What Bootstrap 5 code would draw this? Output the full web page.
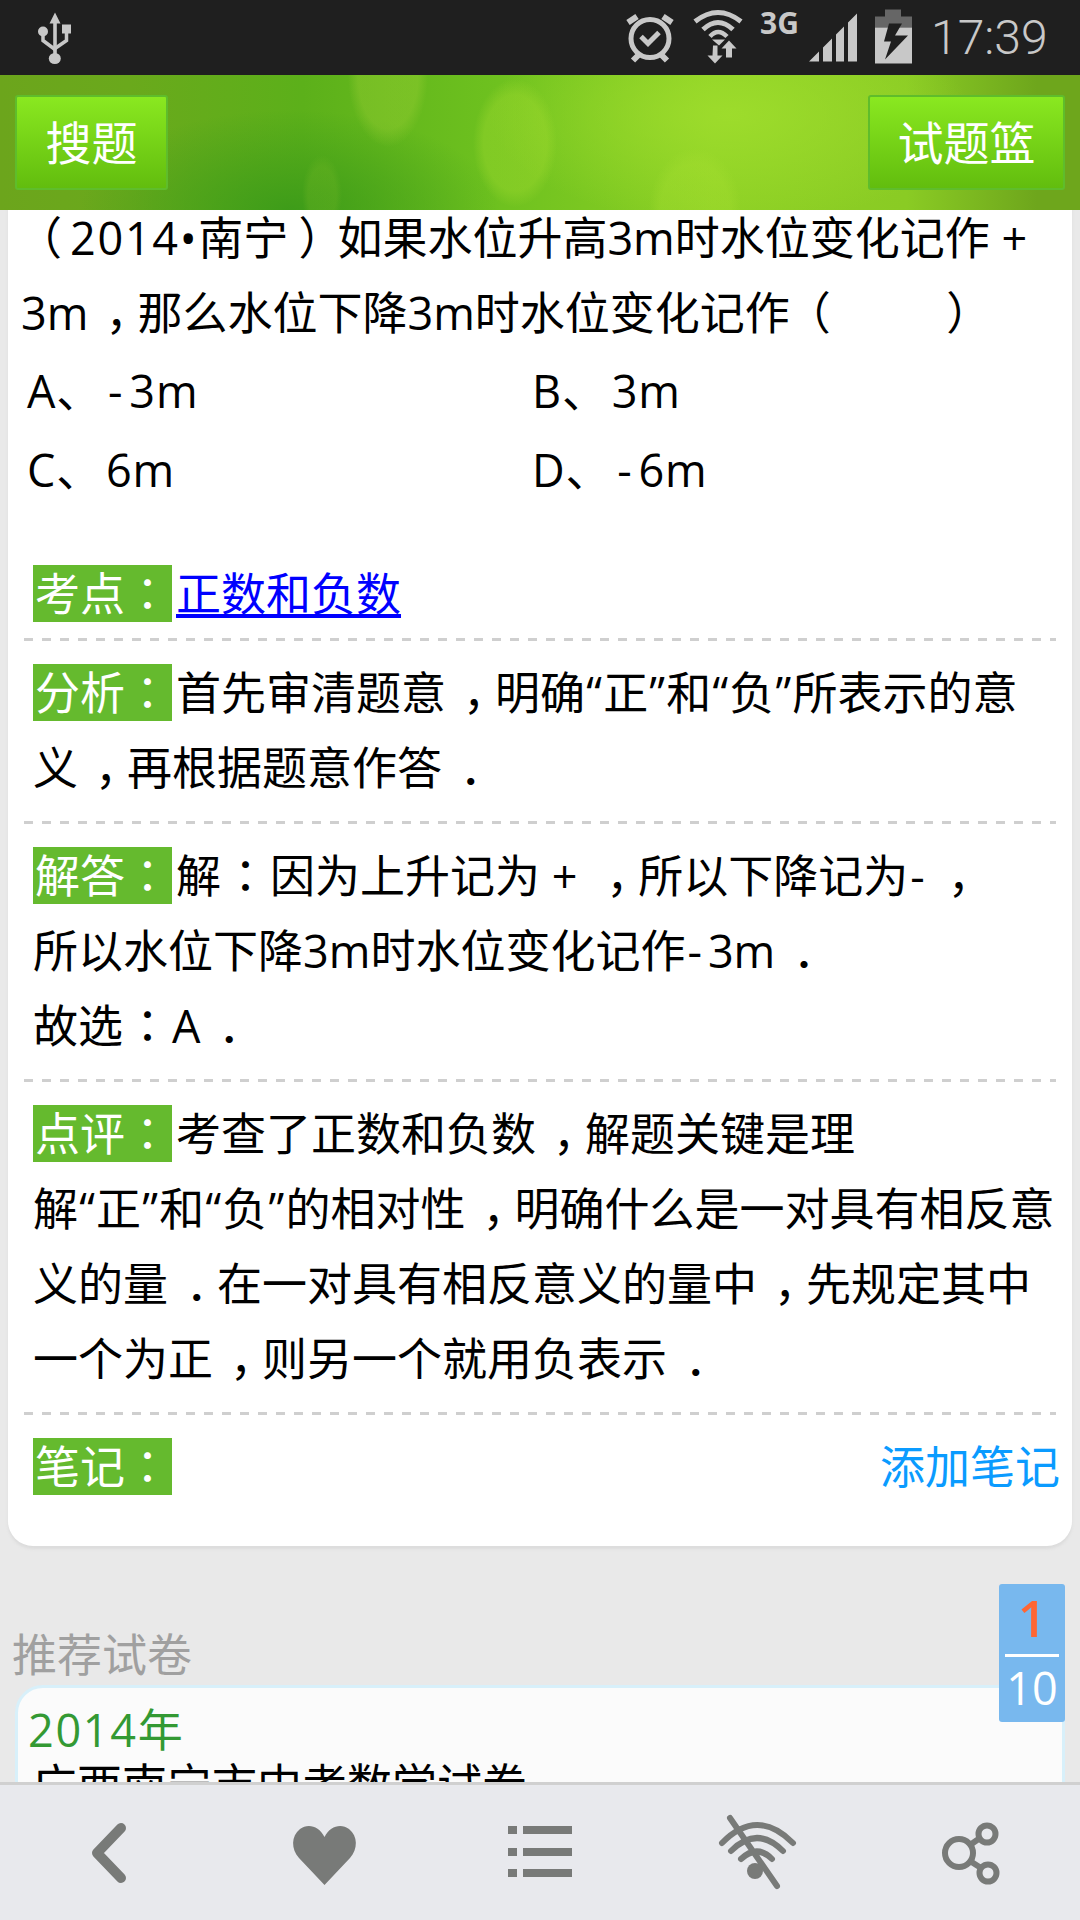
<!DOCTYPE html>
<html>
<head>
<meta charset="utf-8">
<title>试题详情</title>
<link rel="stylesheet" href="https://cdn.jsdelivr.net/npm/bootstrap@5.3.0/dist/css/bootstrap.min.css">
<style>
html,body{height:1920px;overflow:hidden}
body{position:relative;width:1080px;background:#e9e9e9;color:#000;font-family:"Open Sans","Noto Sans CJK SC",sans-serif;font-size:45px;line-height:75px}
.pn{font-family:"Noto Sans CJK TC",sans-serif;padding:0 2px;line-height:1}
.cm,.dt,.pl,.pr{font-feature-settings:"halt"}
.cm{padding:0 9.500px 0 17px}
.dt{padding:0 8.500px 0 18px}
.pl{padding:0 8px 0 18.500px}
.pr{padding:0 16.500px 0 10px}
.ci{margin-right:4px}
.ds{padding:0 6px 0 2px}
.num{letter-spacing:1.700px}
.qt{padding:0 1.200px}
.gap{letter-spacing:.5px}
.sbar{height:75px;background:#1f1f1f;color:#c8c8c8}
.sbar svg{display:block;height:60px;flex:none}
.ic-fill{fill:#c8c8c8}
.ic-line{fill:none;stroke:#c8c8c8}
.sig3g{width:38px;margin:8px 11px 0 17px;font-size:30px;font-weight:700;line-height:30px;align-self:flex-start}
.clock{margin:0 32px 0 18px;width:117px;font-family:Roboto,sans-serif;font-weight:300;font-size:48px;line-height:75px;white-space:nowrap}
.topbar{position:relative;z-index:2;height:135px;padding:20px 15px;
 background:
 radial-gradient(ellipse 40px 72px at 388px 0px,rgba(175,215,60,.28) 75%,rgba(175,215,60,0) 100%),
 radial-gradient(ellipse 42px 64px at 515px 68px,rgba(175,225,50,.3) 75%,rgba(175,225,50,0) 100%),
 radial-gradient(ellipse 46px 62px at 695px 135px,rgba(170,225,50,.3) 75%,rgba(170,225,50,0) 100%),
 radial-gradient(ellipse 20px 40px at 322px 120px,rgba(130,190,40,.22) 70%,rgba(130,190,40,0) 100%),
 radial-gradient(ellipse 210px 100px at 290px 135px,rgba(60,155,25,.95),rgba(60,155,25,0) 100%),
 radial-gradient(ellipse 240px 110px at 730px 40px,rgba(160,222,45,.85),rgba(160,222,45,0) 100%),
 linear-gradient(90deg,#6ca51c 0,#6aa91c 12%,#5cb01a 28%,#6ec11f 46%,#8dd024 66%,#8acb24 84%,#6ea61c 96%,#6ea61c 100%)}
.gbtn.btn{height:95px;padding:0;border:2px solid #5fbd2b;border-radius:3px;background:linear-gradient(#8ae820,#62bd0e);color:#fff;font-size:46px;line-height:90px}
.gbtn-a.btn{width:153px}
.gbtn-b.btn{width:197px}
.sheet.card{margin:0 8px;border:0;background:#fff;border-radius:0 0 25px 25px;box-shadow:0 3px 3px #dcdcdc;height:1346px;color:#000;display:block}
.ask{padding:0 0 0 13px;margin-top:-10px}
.opts{margin:2px 0 0 19px;width:1010px;letter-spacing:.8px}
.opts>div{height:78.5px;line-height:78.5px}
.sect{padding:17px 8px 16px 25px;white-space:nowrap;background-image:repeating-linear-gradient(90deg,#cfcfcf 0 9px,transparent 9px 18px);background-size:1032px 3px;background-position:16px 0;background-repeat:no-repeat}
.sect-first{background-image:none;margin-top:47px;padding-top:0;padding-bottom:7px}
.tag{display:inline-block;width:139px;height:57px;line-height:57px;padding-left:2px;margin:9px 4px 0 0;background:#65ba2e;color:#fff;white-space:nowrap;vertical-align:top}
.tag .pn{padding:0}
.kp{color:#00f;text-decoration:underline}
.addnote{color:#0a9bff;text-decoration:none;margin-right:4px}
.recom{margin:72px 0 0 12px;color:#a0a0a0;line-height:74px;font-size:45px}
.paper.card{margin:-7px 0 0 15px;width:1050px;height:300px;display:block;background:#fbfbfb;border:3px solid #d8f0fa;border-radius:28px;padding:0 10px;color:#000}
.yr{color:#339933;line-height:66px;margin-top:9px}
.ptitle{padding-left:4px;line-height:44px}
.pager{position:absolute;z-index:3;left:999px;top:1584px;width:66px;height:138px;background:#78b8ee;border-radius:3px;color:#fff;text-align:center;line-height:1}
.pg-now{color:#ff6633;font-size:50px;font-weight:600;height:73px;line-height:68px;margin:0 6px;border-bottom:3px solid #fff}
.pg-all{font-size:45px;line-height:62px}
.dock{position:absolute;z-index:3;left:0;right:0;top:1782px;height:138px;background:#e8e9ed;border-top:3px solid #d0d0d0}
.dock-cell{flex:1 1 0}
.dock svg{display:block;width:90px;height:90px}
.gy{fill:#787a78}
.gl{fill:none;stroke:#787a78}
</style>
</head>
<body>
<div class="sbar d-flex align-items-center">
  <svg style="width:36px;margin-left:37px" viewBox="37 7.5 36 60"><path class="ic-fill" d="M55 12l5.500 11h-3.700v31h-3.600V23h-3.700z"/><ellipse class="ic-fill" cx="54.800" cy="58" rx="6" ry="5.500"/><circle class="ic-fill" cx="43" cy="31" r="5"/><rect class="ic-fill" x="62" y="24" width="9" height="9"/><path class="ic-line" stroke-width="3.500" d="M43 33v7l12 9M66.500 32v8l-11.500 8"/></svg>
  <div class="ms-auto d-flex align-items-center">
    <svg style="width:50px" viewBox="625 7.5 50 60"><circle class="ic-line" cx="650" cy="38" r="19" stroke-width="5"/><path class="ic-line" stroke-width="5" d="M641 36l7 7 11-11"/><path class="ic-line" stroke-width="6" d="M628 22l9-6M672 22l-9-6M633 60l6-6M667 60l-6-6"/></svg>
    <svg style="width:50px;margin-left:18px" viewBox="693 7.500 50 60"><path class="ic-line" stroke-width="5" d="M695 21Q718 3 741 21M703 29Q718 15 733 29"/><path class="ic-line" stroke-width="4.500" d="M710 36Q718 27 727 36"/><path class="ic-fill" d="M712 39h13l-6 6zM713 45h4.500v10h5l-7.500 8-7.500-8h5zM726 57V48h-4.500l7.500-8 7.500 8h-4.500v9z"/></svg>
    <div class="sig3g">3G</div>
    <svg style="width:48px" viewBox="809 7.500 48 60"><path class="ic-fill" d="M809 61l10-10v10zM823 61V47l9-9v23zM836 61V34l8-8v35zM848 61V22l9-9v48z"/></svg>
    <svg style="width:38px;margin-left:18px" viewBox="875 7.500 38 60"><path fill="#666" d="M885 9h16v7h11v11h-37V16h10z"/><path class="ic-fill" d="M875 27h37v36h-37z"/><path fill="#1f1f1f" d="M889 23h13l-7 12h13l-23 24 6-18h-7z"/></svg>
    <div class="clock">17:39</div>
  </div>
</div>
<header class="topbar d-flex justify-content-between">
  <a class="btn gbtn gbtn-a">搜题</a>
  <a class="btn gbtn gbtn-b">试题篮</a>
</header>
<main class="card sheet">
  <div class="ask"><span class="pl">（</span><span class="num">2014•</span>南宁<span class="pr">）</span>如果水位升高3m时水位变化记作 +<br>3m<span class="cm">，</span>那么水位下降3m时水位变化记作<span class="pl">（</span><span class="gap">&nbsp;&nbsp;&nbsp;&nbsp;&nbsp;&nbsp;&nbsp;&nbsp;</span><span class="pr">）</span></div>
  <div class="row g-0 opts">
    <div class="col-6">A<span class="ci">、</span><span class="ds">-</span>3m</div>
    <div class="col-6">B<span class="ci">、</span>3m</div>
    <div class="col-6">C<span class="ci">、</span>6m</div>
    <div class="col-6">D<span class="ci">、</span><span class="ds">-</span>6m</div>
  </div>
  <section class="sect sect-first"><span class="tag">考点<span class="pn">：</span></span><a class="kp" href="#">正数和负数</a></section>
  <section class="sect"><span class="tag">分析<span class="pn">：</span></span>首先审清题意<span class="cm">，</span>明确<span class="qt">“</span>正<span class="qt">”</span>和<span class="qt">“</span>负<span class="qt">”</span>所表示的意<br>义<span class="cm">，</span>再根据题意作答<span class="dt">．</span></section>
  <section class="sect"><span class="tag">解答<span class="pn">：</span></span>解<span class="pn">：</span>因为上升记为 + <span class="cm">，</span>所以下降记为<span class="ds">-</span><span class="cm">，</span><br>所以水位下降3m时水位变化记作<span class="ds">-</span>3m<span class="dt">．</span><br>故选<span class="pn">：</span>A<span class="dt">．</span></section>
  <section class="sect"><span class="tag">点评<span class="pn">：</span></span>考查了正数和负数<span class="cm">，</span>解题关键是理<br>解<span class="qt">“</span>正<span class="qt">”</span>和<span class="qt">“</span>负<span class="qt">”</span>的相对性<span class="cm">，</span>明确什么是一对具有相反意<br>义的量<span class="dt">．</span>在一对具有相反意义的量中<span class="cm">，</span>先规定其中<br>一个为正<span class="cm">，</span>则另一个就用负表示<span class="dt">．</span></section>
  <section class="sect d-flex justify-content-between"><span class="tag align-self-start">笔记<span class="pn">：</span></span><a class="addnote" href="#">添加笔记</a></section>
</main>
<h2 class="recom fw-normal mb-0">推荐试卷</h2>
<div class="card paper">
  <div class="yr"><span class="num">2014</span>年</div>
  <div class="ptitle">广西南宁市中考数学试卷</div>
</div>
<div class="pager"><div class="pg-now">1</div><div class="pg-all">10</div></div>
<nav class="dock d-flex align-items-center">
  <div class="dock-cell d-flex justify-content-center"><svg viewBox="62 1807 90 90"><path class="gl" stroke-width="10" stroke-linecap="round" stroke-linejoin="round" d="M120 1827l-24 25 24 25"/></svg></div>
  <div class="dock-cell d-flex justify-content-center"><svg viewBox="278 1807 90 90"><path class="gy" d="M323.500 1884L298 1857C290 1848 290 1835 299 1828C307 1822 318 1825 323.500 1836C329 1825 340 1822 348 1828C357 1835 357 1848 349 1857Z"/></svg></div>
  <div class="dock-cell d-flex justify-content-center"><svg viewBox="495 1807 90 90"><path class="gy" d="M508 1825h9v8h-9zM523 1825h49v8h-49zM508 1847h9v8h-9zM523 1847h49v8h-49zM508 1868h9v8h-9zM523 1868h49v8h-49z"/></svg></div>
  <div class="dock-cell d-flex justify-content-center"><svg viewBox="711 1807 90 90"><path class="gl" stroke-width="6" stroke-linecap="round" d="M730 1817l47 68M722 1842Q757 1806 793 1842M731 1850Q757 1824 783 1850M741 1858Q757 1843 772 1858"/><circle class="gy" cx="755" cy="1870" r="8"/></svg></div>
  <div class="dock-cell d-flex justify-content-center"><svg viewBox="926 1807 90 90"><g class="gl" stroke-width="6"><circle cx="958" cy="1852" r="14"/><circle cx="986" cy="1833" r="8.500"/><circle cx="987" cy="1872" r="8.500"/><path d="M969 1844l10-7M969 1860l11 7"/></g></svg></div>
</nav>
</body>
</html>
